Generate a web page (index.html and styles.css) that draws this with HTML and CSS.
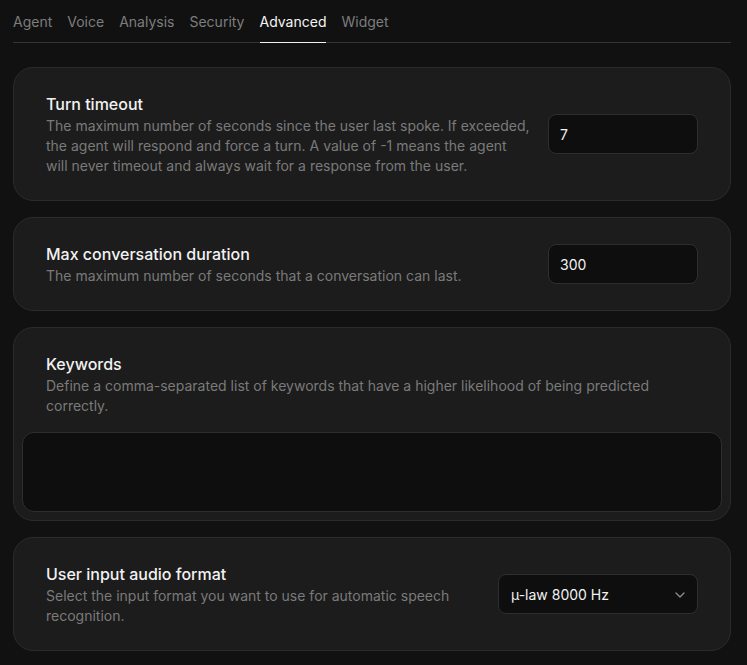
FILE: index.html
```html
<!DOCTYPE html>
<html lang="en">
<head>
<meta charset="utf-8">
<title>Advanced settings</title>
<link rel="stylesheet" href="styles.css">
</head>
<body>
<div class="page">
  <nav class="tabs">
    <span class="tab">Agent</span>
    <span class="tab">Voice</span>
    <span class="tab">Analysis</span>
    <span class="tab">Security</span>
    <span class="tab active">Advanced</span>
    <span class="tab">Widget</span>
  </nav>

  <section class="card">
    <div class="row">
      <div class="text">
        <h3 class="title">Turn timeout</h3>
        <p class="desc">The maximum number of seconds since the user last spoke. If exceeded, the agent will respond and force a turn. A value of -1 means the agent will never timeout and always wait for a response from the user.</p>
      </div>
      <input class="field" type="text" value="7">
    </div>
  </section>

  <section class="card">
    <div class="row">
      <div class="text">
        <h3 class="title">Max conversation duration</h3>
        <p class="desc">The maximum number of seconds that a conversation can last.</p>
      </div>
      <input class="field" type="text" value="300">
    </div>
  </section>

  <section class="card card-area">
    <div class="text area-head">
      <h3 class="title">Keywords</h3>
      <p class="desc">Define a comma-separated list of keywords that have a higher likelihood of being predicted correctly.</p>
    </div>
    <textarea class="area"></textarea>
  </section>

  <section class="card">
    <div class="row">
      <div class="text">
        <h3 class="title">User input audio format</h3>
        <p class="desc">Select the input format you want to use for automatic speech recognition.</p>
      </div>
      <div class="select">
        <span>µ-law 8000 Hz</span>
        <svg class="chev" width="10" height="6" viewBox="0 0 10 6" fill="none"><path d="M1 1l4 4 4-4" stroke="#8a8a8a" stroke-width="1.4" stroke-linecap="round" stroke-linejoin="round"/></svg>
      </div>
    </div>
  </section>
</div>
</body>
</html>
```

FILE: styles.css
```css
* { box-sizing: border-box; }
html, body { margin: 0; padding: 0; background: #111111; }
body {
  font-family: Inter, "Noto Sans", "Liberation Sans", sans-serif;
  color: #ededed;
  -webkit-font-smoothing: antialiased;
}
.page {
  padding: 0 16px 0 13px;
}
.tabs {
  display: flex;
  gap: 15px;
  padding-top: 12px;
  border-bottom: 1px solid #343434;
  margin-bottom: 24px;
}
.tab {
  font-size: 14px;
  line-height: 20px;
  color: #7d7d7d;
  padding-bottom: 10px;
  margin-bottom: -1px;
  border-bottom: 1px solid transparent;
  font-weight: 400;
}
.tab.active {
  color: #f5f5f5;
  border-bottom-color: #f2f2f2;
}
.card {
  background: #1c1c1c;
  border: 1px solid #2b2b2b;
  border-radius: 20px;
  padding: 24px 32px;
  margin-bottom: 16px;
}
.row {
  display: flex;
  align-items: center;
  gap: 16px;
}
.text { flex: 1; min-width: 0; }
.title {
  margin: 0;
  font-size: 16px;
  line-height: 24px;
  font-weight: 500;
  color: #f2f2f2;
}
.desc {
  margin: 0;
  font-size: 14px;
  line-height: 20px;
  color: #7a7a7a;
}
.field {
  width: 150px;
  height: 40px;
  flex: none;
  background: #0e0e0e;
  border: 1px solid #2e2e2e;
  border-radius: 8px;
  padding: 0 11px;
  font-family: inherit;
  font-size: 14px;
  color: #f2f2f2;
  outline: none;
}
.card-area {
  padding: 24px 8px 8px;
}
.area-head {
  padding: 0 24px;
}
.area {
  display: block;
  width: 100%;
  height: 80px;
  margin-top: 16px;
  background: #0e0e0e;
  border: 1px solid #2e2e2e;
  border-radius: 12px;
  resize: none;
  outline: none;
  font-family: inherit;
}
.select {
  width: 200px;
  height: 40px;
  flex: none;
  background: #0e0e0e;
  border: 1px solid #2e2e2e;
  border-radius: 8px;
  padding: 0 12px;
  display: flex;
  align-items: center;
  justify-content: space-between;
  font-size: 14px;
  color: #f2f2f2;
}
.chev { display: block; margin-top: 1px; }
```
